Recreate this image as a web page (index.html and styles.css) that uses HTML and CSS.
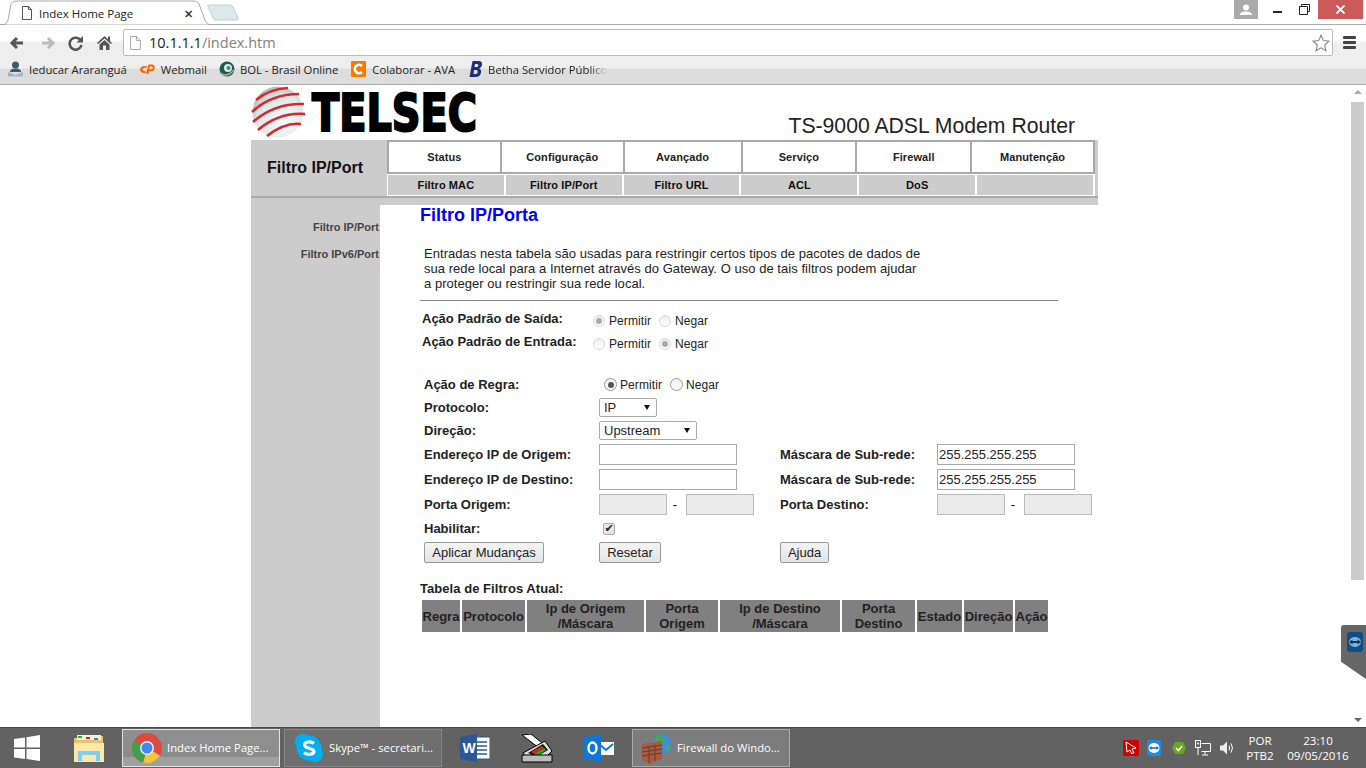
FILE: index.html
```html
<!DOCTYPE html>
<html lang="pt-BR">
<head>
<meta charset="utf-8">
<title>Index Home Page</title>
<link rel="stylesheet" href="styles.css">
</head>
<body>
<div class="screen">
  <div class="tabstrip">
    <div class="tab">
      <svg class="tab-shape" width="240" height="26" viewBox="0 0 240 26"><path d="M0 24.500H3C6 24.500 7 23 8 20L11 4C12 2 14 1 17 1H193C196 1 198 2 199 4L205 20C206 23 207 24.500 211 24.500H240" fill="#fff" stroke="#aaa"/><path d="M208 6.500C207 5.500 208 5 210 5H229C231 5 232 5.500 233 7L238 18C238.500 19.500 238 20 236 20H216C214 20 213.500 19.500 213 18Z" fill="#dbe9ea" stroke="#c4cfd0"/></svg>
      <svg class="tab-fav" width="12" height="14" viewBox="0 0 12 14"><path d="M1.500.5H7.500L10.500 3.500V13.500H1.500Z M7.500.5V3.500H10.500" fill="#fff" stroke="#555"/></svg>
      <span class="tab-title">Index Home Page</span>
      <span class="tab-close">✕</span>
    </div>
    <div class="window-controls">
      <div class="profile"><svg width="14" height="12" viewBox="0 0 14 12"><circle cx="7" cy="3.500" r="3" fill="#fff"/><path d="M1 11C1 8 4 7.500 7 7.500S13 8 13 11Z" fill="#fff"/></svg></div>
      <div class="win-btn win-min"><svg width="10" height="3" viewBox="0 0 10 3"><rect width="9" height="2" y="1" fill="#222"/></svg></div>
      <div class="win-btn"><svg width="11" height="11" viewBox="0 0 11 11"><path d="M2.500 2.500V.5H10.500V7.500H8.500M.5 2.500H8.500V10.500H.5Z" fill="none" stroke="#222"/></svg></div>
      <div class="win-close"><svg width="9" height="9" viewBox="0 0 9 9"><path d="M.5.5L8.500 8.500M8.500.5L.5 8.500" stroke="#fff" stroke-width="1.800"/></svg></div>
    </div>
  </div>
  <div class="toolbar">
    <svg class="nav-icon n-back" width="16" height="14" viewBox="0 0 16 14"><path d="M14 7H4M8 2L3 7L8 12" fill="none" stroke="#555" stroke-width="3"/></svg>
    <svg class="nav-icon n-fwd" width="16" height="14" viewBox="0 0 16 14"><path d="M2 7H12M8 2L13 7L8 12" fill="none" stroke="#bbb" stroke-width="3"/></svg>
    <svg class="nav-icon n-reload" width="16" height="16" viewBox="0 0 16 16"><path d="M13 6A6 6 0 1 0 13.500 10" fill="none" stroke="#555" stroke-width="2.600"/><path d="M15 1V7.500H8.500Z" fill="#555"/></svg>
    <svg class="nav-icon n-home" width="15" height="15" viewBox="0 0 15 15"><path d="M0 8L7.500 1L11 4.200V1.500H13V6L15 8L13.800 9L7.500 3.500L1.200 9Z M2.500 9.500L7.500 5L12.500 9.500V15H9V10.500H6V15H2.500Z" fill="#555"/></svg>
    <div class="omnibox">
      <svg width="11" height="14" viewBox="0 0 11 14"><path d="M.5.5H6.500L10.500 4.500V13.500H.5Z M6.500.5V4.500H10.500" fill="#fff" stroke="#aaa"/></svg>
      <span class="url"><span class="url-host">10.1.1.1</span>/index.htm</span>
      <svg class="star" width="18" height="18" viewBox="0 0 18 18"><path d="M9 1.200L11.300 6.600L17 7.100L12.700 11L14 16.800L9 13.800L4 16.800L5.300 11L1 7.100L6.700 6.600Z" fill="#fff" stroke="#888" stroke-width="1.100"/></svg>
    </div>
    <div class="menu-btn"><i></i><i></i><i></i></div>
  </div>
  <div class="bookmarks">
    <div class="bm bm-1"><svg width="17" height="16" viewBox="0 0 17 16"><circle cx="8.500" cy="4" r="3.500" fill="#3d5a6c"/><path d="M3 11C3 8 6 7.500 8.500 7.500S14 8 14 11Z" fill="#3d5a6c"/><path d="M1 11L8.500 14L16 11V15.500H1Z" fill="#9fb4c0"/></svg><span>Ieducar Araranguá</span></div>
    <div class="bm bm-2"><svg width="17" height="12" viewBox="0 0 17 12"><path d="M8 3H6C3 3 1 4 1 6.500S3 10 5 10H6.500L7 8.200H5.500C3 8.200 3 4.800 5.500 4.800H7.500Z" fill="#f60"/><path d="M9.500 1.500L7 11H9.300L10 8.200H12.500C16.500 8.200 17 1.500 13 1.500ZM10.800 3.500H12.500C14.300 3.500 14 6.300 12.300 6.300H10.300Z" fill="#f60" fill-rule="evenodd"/></svg><span>Webmail</span></div>
    <div class="bm bm-3"><svg width="16" height="16" viewBox="0 0 16 16"><circle cx="8" cy="8" r="7.500" fill="#1d5c4a"/><circle cx="9" cy="7" r="4" fill="#dfe9e4"/><circle cx="9.500" cy="7" r="2" fill="#2d8a9a"/><path d="M1 12Q8 17 15 9" fill="none" stroke="#aaa" stroke-width="1.500"/></svg><span>BOL - Brasil Online</span></div>
    <div class="bm bm-4"><svg width="15" height="16" viewBox="0 0 15 16"><rect width="15" height="16" rx="1" fill="#f57c00"/><path d="M11 5A4.200 4.200 0 1 0 11 11" fill="none" stroke="#fff" stroke-width="2.600"/></svg><span>Colaborar - AVA</span></div>
    <div class="bm bm-5"><svg width="14" height="16" viewBox="0 0 13 16"><path d="M3 0H9C12 0 13 2 12.500 4C12 6 11 7 9.500 7.500C11 8 12 9.500 11.500 11.500C11 14.500 9 16 5.500 16H0ZM5.500 3L5 6H7.500C9 6 9.500 3 7.500 3ZM4.500 9L4 13H6.500C8.500 13 9 9 7 9Z" fill="#1f2f7c" fill-rule="evenodd"/></svg><span class="bm-fade">Betha Servidor Público</span></div>
  </div>
  <div class="viewport">
    <div class="page">
      <div class="router">
        <header class="brand">
          <svg class="logo" width="226" height="55" viewBox="0 0 226 55">
            <defs><radialGradient id="globe" cx=".6" cy=".7" r=".75"><stop offset="0" stop-color="#f6fafa"/><stop offset=".7" stop-color="#dce8e8"/><stop offset="1" stop-color="#9fb2b2"/></radialGradient></defs>
            <circle cx="27" cy="27" r="25.500" fill="url(#globe)"/>
            <g fill="none" stroke="#e3222a" stroke-width="2.600">
              <path d="M5 15Q18 4 37 3"/>
              <path d="M1 27Q20 9 48 9"/>
              <path d="M2 37Q23 18 53 19"/>
              <path d="M7 45Q28 27 54 29"/>
              <path d="M16 51Q34 37 50 39"/>
            </g>
            <text class="logo-text" x="61" y="46" textLength="165" lengthAdjust="spacingAndGlyphs">TELSEC</text>
          </svg>
          <h1 class="model">TS-9000 ADSL Modem Router</h1>
        </header>
        <div class="band">
          <div class="band-title">Filtro IP/Port</div>
          <nav class="menus">
            <div class="menu-top">
              <a class="top-a">Status</a><a class="top-b">Configuração</a><a class="top-c">Avançado</a><a class="top-d">Serviço</a><a class="top-d">Firewall</a><a class="top-b">Manutenção</a>
            </div>
            <div class="menu-sub">
              <a class="sub-b">Filtro MAC</a><a class="sub-b">Filtro IP/Port</a><a class="sub-b">Filtro URL</a><a class="sub-b">ACL</a><a class="sub-b">DoS</a><a class="sub-b"></a>
            </div>
          </nav>
        </div>
        <div class="body">
          <aside class="side">
            <a>Filtro IP/Port</a>
            <a>Filtro IPv6/Port</a>
          </aside>
          <main class="content">
            <h2 class="heading">Filtro IP/Porta</h2>
            <p class="intro">Entradas nesta tabela são usadas para restringir certos tipos de pacotes de dados de<br>sua rede local para a Internet através do Gateway. O uso de tais filtros podem ajudar<br>a proteger ou restringir sua rede local.</p>
            <hr class="rule">
            <div class="defaults">
              <div class="d-label">Ação Padrão de Saída:</div>
              <div class="radios"><input class="radio off" type="radio" name="o" checked disabled><span>Permitir</span><input class="radio off" type="radio" name="o" disabled><span>Negar</span></div>
              <div class="d-label">Ação Padrão de Entrada:</div>
              <div class="radios"><input class="radio off" type="radio" name="i" disabled><span>Permitir</span><input class="radio off" type="radio" name="i" checked disabled><span>Negar</span></div>
            </div>
            <form class="rule-form">
              <div class="f-label">Ação de Regra:</div>
              <div class="radios big span3"><input class="radio" type="radio" name="r" checked><span>Permitir</span><input class="radio" type="radio" name="r"><span>Negar</span></div>
              <div class="f-label">Protocolo:</div>
              <div class="span3"><span class="select s-ip"><select><option>IP</option></select></span></div>
              <div class="f-label">Direção:</div>
              <div class="span3"><span class="select s-dir"><select><option>Upstream</option></select></span></div>
              <div class="f-label">Endereço IP de Origem:</div>
              <div><input class="field" type="text"></div>
              <div class="f-label">Máscara de Sub-rede:</div>
              <div><input class="field" type="text" value="255.255.255.255"></div>
              <div class="f-label">Endereço IP de Destino:</div>
              <div><input class="field" type="text"></div>
              <div class="f-label">Máscara de Sub-rede:</div>
              <div><input class="field" type="text" value="255.255.255.255"></div>
              <div class="f-label">Porta Origem:</div>
              <div class="ports"><input class="port" type="text" disabled><span>-</span><input class="port" type="text" disabled></div>
              <div class="f-label">Porta Destino:</div>
              <div class="ports"><input class="port" type="text" disabled><span>-</span><input class="port" type="text" disabled></div>
              <div class="f-label">Habilitar:</div>
              <div class="span3"><input class="check" type="checkbox" checked></div>
              <div><button class="btn b-apply" type="button">Aplicar Mudanças</button></div>
              <div><button class="btn b-reset" type="button">Resetar</button></div>
              <div class="span2"><button class="btn b-help" type="button">Ajuda</button></div>
            </form>
            <div class="table-title">Tabela de Filtros Atual:</div>
            <table class="filters">
              <tr>
                <th class="c1">Regra</th><th class="c2">Protocolo</th><th class="c3">Ip de Origem<br>/Máscara</th><th class="c4">Porta<br>Origem</th><th class="c5">Ip de Destino<br>/Máscara</th><th class="c6">Porta<br>Destino</th><th class="c7">Estado</th><th class="c8">Direção</th><th class="c9">Ação</th>
              </tr>
            </table>
          </main>
        </div>
      </div>
    </div>
    <div class="scrollbar">
      <i class="arrow-up"></i>
      <div class="thumb"></div>
      <i class="arrow-down"></i>
    </div>
    <div class="tv-tab"><svg width="18" height="22" viewBox="0 0 18 22"><rect x="1" y="1" width="16" height="20" rx="3" fill="#0f4f86"/><ellipse cx="9" cy="11" rx="6" ry="5" fill="#7fb4d8"/><path d="M3 11L6.500 8.500V10H11.500V8.500L15 11L11.500 13.500V12H6.500V13.500Z" fill="#0f3a60"/></svg></div>
  </div>
  <footer class="taskbar">
    <svg class="tb-win" width="26" height="26" viewBox="0 0 26 26"><path d="M0 4L11 2.500V12.500H0ZM12.500 2.200L26 0V12.500H12.500ZM0 14H11V24L0 22.500ZM12.500 14H26V26L12.500 24Z" fill="#fff"/></svg>
    <svg class="tb-folder" width="32" height="29" viewBox="0 0 32 29"><path d="M1 4H9L11 2H30V28H1Z" fill="#e9c46a"/><rect x="4" y="1" width="24" height="5" fill="#f6f0d8"/><rect x="5" y="2" width="4" height="2" fill="#3a3"/><rect x="13" y="3" width="4" height="2" fill="#c33"/><rect x="21" y="4" width="4" height="2" fill="#38c"/><path d="M1 9H31V28H1Z" fill="#fbe9a8"/><path d="M5 27V17H27V27H23V21H9V27Z" fill="#7fd0f0"/></svg>
    <div class="task active">
      <svg width="30" height="30" viewBox="0 0 30 30"><circle cx="15" cy="15" r="15" fill="#dd4b3e"/><path d="M15 15L28 22.500A15 15 0 0 1 11 29.500Z" fill="#f6c33c"/><path d="M15 15L11 29.500A15 15 0 0 1 2 7.500Z" fill="#3fa14a"/><circle cx="15" cy="15" r="7" fill="#eef"/><circle cx="15" cy="15" r="5.500" fill="#4285f4"/></svg>
      <span>Index Home Page...</span>
    </div>
    <div class="task">
      <svg width="30" height="30" viewBox="0 0 30 30"><circle cx="9" cy="9" r="8" fill="#00aff0"/><circle cx="21" cy="21" r="8" fill="#00aff0"/><circle cx="15" cy="15" r="12.500" fill="#00aff0"/><path d="M20 10.500C18 8.500 10.500 8 10.500 12C10.500 16 20 14.500 20 18.500C20 22 12 22 10 19.500" fill="none" stroke="#fff" stroke-width="3.200"/></svg>
      <span>Skype™ - secretari...</span>
    </div>
    <svg class="tb-word" width="30" height="28" viewBox="0 0 30 28"><rect x="12" y="3" width="18" height="22" fill="#fff" stroke="#2b579a"/><path d="M15 8H27M15 12H27M15 16H27M15 20H27" stroke="#2b579a" stroke-width="1.500"/><path d="M0 3L17 0V28L0 25Z" fill="#2b579a"/><text class="word-w" x="2.500" y="19">W</text></svg>
    <svg class="tb-scan" width="32" height="29" viewBox="0 0 32 29"><path d="M1 1L10 0L31 17L26 20Z" fill="#fff" stroke="#000"/><path d="M2 19L24 7L31 17L24 24L6 24Z" fill="#ddd" stroke="#000"/><path d="M7 19L22 10L27 16L15 23Z" fill="#181818"/><path d="M10 18L21 12L23 14L13 20Z" fill="#d22"/><path d="M13 20L23 14L25 16L16 22Z" fill="#2a2"/><path d="M1 21H31V28H1Z" fill="#bbb" stroke="#000"/></svg>
    <svg class="tb-out" width="30" height="28" viewBox="0 0 30 28"><rect x="14" y="8" width="16" height="13" fill="#fff"/><path d="M15 10L22 16L29 10" fill="none" stroke="#0f78d4" stroke-width="2"/><path d="M0 3L17 0V28L0 25Z" fill="#0f78d4"/><ellipse cx="8.500" cy="14" rx="4" ry="5.500" fill="none" stroke="#fff" stroke-width="2.400"/></svg>
    <div class="task task-fw">
      <svg width="32" height="31" viewBox="0 0 32 31"><circle cx="21" cy="11" r="10" fill="#3f8fd6"/><path d="M15 3L24 4L22 11L15 10Z M25 12L30 13L26 20Z" fill="#4fa84a"/><path d="M1 11L21 8V26L8 31L1 27Z" fill="#a85a44"/><path d="M1 15L21 12M1 19L21 16M1 23L21 20M8 13V30M14 12V28" stroke="#6e3a2c"/></svg>
      <span>Firewall do Windo...</span>
    </div>
    <div class="tray">
      <svg width="16" height="16" viewBox="0 0 16 16"><rect width="16" height="16" rx="1" fill="#d40000"/><path d="M3 2L13 8L9 9L11 13L8.500 13.500L7 10L4 12Z" fill="none" stroke="#fff"/></svg>
      <svg class="t-tv" width="14" height="16" viewBox="0 0 14 16"><rect width="14" height="16" rx="2" fill="#1c8be6"/><ellipse cx="7" cy="8" rx="5.500" ry="5" fill="#fff"/><path d="M2 8L4.500 6V7.200H9.500V6L12 8L9.500 10V8.800H4.500V10Z" fill="#1c6bb6"/></svg>
      <svg class="t-gr" width="14" height="14" viewBox="0 0 14 14"><path d="M3 1L11 1L14 7L11 13L3 13L0 7Z" fill="#6aa51e"/><path d="M4 7L6.500 9.500L10 5" fill="none" stroke="#fff" stroke-width="1.500"/></svg>
      <svg class="t-net" width="16" height="16" viewBox="0 0 16 16"><path d="M6.500 3.500H15.500V11.500H6.500M10 11.500V14.500M7 15H13" fill="none" stroke="#fff"/><rect x=".5" y=".5" width="5" height="7" fill="#666" stroke="#fff"/><path d="M3 7.500V15" stroke="#fff"/><circle cx="3" cy="3.500" r="1" fill="#fff"/></svg>
      <svg class="t-vol" width="16" height="16" viewBox="0 0 16 16"><path d="M1 5.500H4L8 1.500V14.500L4 10.500H1Z" fill="#eee"/><path d="M10 5.500Q11.500 8 10 10.500M12 3.500Q15 8 12 12.500" fill="none" stroke="#fff"/></svg>
      <div class="lang">POR<br>PTB2</div>
      <div class="clock">23:10<br>09/05/2016</div>
    </div>
  </footer>
</div>
</body>
</html>
```

FILE: styles.css
```css
* { box-sizing: border-box; }
html, body { margin: 0; padding: 0; height: 100%; overflow: hidden; }
body { font-family: "Liberation Sans", Arial, sans-serif; color: #000; background: #fff; }
.screen { width: 1366px; height: 768px; display: flex; flex-direction: column; overflow: hidden; }

/* browser chrome */
.tabstrip { height: 24px; flex: none; display: flex; justify-content: space-between; background: #fff; position: relative; z-index: 2; }
.tab { position: relative; width: 240px; height: 24px; display: flex; align-items: center; font-family: "Open Sans", sans-serif; font-size: 11.500px; color: #222; }
.tab-shape { position: absolute; left: 0; top: 0; overflow: visible; }
.tab-fav { position: relative; margin: 2px 0 0 21px; flex: none; }
.tab-title { position: relative; margin: 2px 0 0 6px; width: 145px; flex: none; white-space: nowrap; }
.tab-close { position: relative; margin-top: 2px; font-size: 11px; font-weight: 700; color: #444; }
.window-controls { display: flex; align-items: flex-start; margin-right: 3px; }
.profile { width: 24px; height: 19px; background: #aaa; display: flex; align-items: center; justify-content: center; margin-right: 7px; }
.win-btn { width: 26px; height: 19px; display: flex; align-items: center; justify-content: center; }
.win-min { padding-top: 4px; }
.win-close { width: 45px; height: 19px; background: #cd5a5a; display: flex; align-items: center; justify-content: center; margin-left: 1px; }

.toolbar { height: 32px; flex: none; display: flex; align-items: center; padding: 4px 0 0 9px; background: linear-gradient(#fff 0, #fff 45%, #eee 60%, #eee 100%); border-top: 1px solid #aaa; font-family: "Open Sans", sans-serif; }
.nav-icon { flex: none; }
.n-back { margin-right: 15px; }
.n-fwd { margin-right: 12px; }
.n-reload { margin-right: 13px; }
.n-home { margin-right: 11px; }
.omnibox { width: 1210px; height: 27px; background: #fff; border: 1px solid #bbb; border-radius: 2px; display: flex; align-items: center; padding: 0 2px 0 6px; }
.url { margin-left: 8px; font-size: 14.500px; color: #808080; flex: 1; }
.url-host { color: #222; }
.star { flex: none; }
.menu-btn { width: 13px; margin-left: 10px; display: flex; flex-direction: column; gap: 2px; }
.menu-btn i { height: 3px; background: #444; border-radius: 1px; }

.bookmarks { height: 29px; flex: none; display: flex; align-items: center; padding: 0 0 2px 7px; background: linear-gradient(#eee 0, #eee 42%, #ddd 47%, #ddd 100%); border-bottom: 1px solid #aaa; font-family: "Open Sans", sans-serif; font-size: 11.300px; color: #222; white-space: nowrap; }
.bm { display: flex; align-items: center; gap: 5px; }
.bm-2 { margin-left: 12px; }
.bm-3 { margin-left: 12px; }
.bm-4 { margin-left: 13px; gap: 6px; }
.bm-5 { margin-left: 14px; }
.bm-fade { width: 119px; overflow: hidden; -webkit-mask-image: linear-gradient(90deg, #000 85%, transparent 100%); mask-image: linear-gradient(90deg, #000 85%, transparent 100%); }

/* viewport */
.viewport { flex: 1; min-height: 0; display: flex; background: #fff; position: relative; }
.page { flex: 1; padding-left: 251px; overflow: hidden; }
.router { width: 847px; height: 100%; display: flex; flex-direction: column; }
.brand { height: 55px; flex: none; display: flex; justify-content: space-between; align-items: flex-end; }
.logo { display: block; flex: none; overflow: visible; }
.logo-text { font-family: "DejaVu Sans", sans-serif; font-weight: 700; font-size: 51px; fill: #000; stroke: #000; stroke-width: 2.200px; }
.model { margin: 0 23px 1px 0; font-weight: 400; font-size: 21.200px; line-height: 26px; color: #222; white-space: nowrap; }

.band { height: 65px; flex: none; display: flex; background: #ccc; position: relative; }
.band::after { content: ""; position: absolute; left: 0; right: 0; top: 56px; height: 2px; background: #aaa; }
.band-title { width: 136px; padding: 18px 0 0 16px; font-size: 16px; line-height: 20px; font-weight: 700; white-space: nowrap; color: #111; }
.menus { width: 708px; font-size: 11px; font-weight: 700; color: #222; }
.menu-top { height: 34px; display: flex; padding: 2px 0 0 2px; background: #aaa; }
.menu-top a { height: 30px; margin-right: 2px; background: #fff; display: flex; align-items: center; justify-content: center; letter-spacing: .1px; }
.top-a { width: 111px; }
.top-b { width: 121px; }
.top-c { width: 116px; }
.top-d { width: 113px; }
.menu-sub { height: 22px; display: flex; padding: 1px 0 0 1px; background: #fff; }
.menu-sub a { height: 20px; margin-right: 2px; background: #ccc; display: flex; align-items: center; justify-content: center; letter-spacing: .1px; color: #111; }
.sub-b { width: 116px; }

.body { flex: 1; min-height: 0; display: flex; }
.side { width: 129px; flex: none; background: #ccc; padding: 16px 1px 0 0; display: flex; flex-direction: column; align-items: flex-end; gap: 14px; font-size: 11px; font-weight: 700; line-height: 13px; color: #444; }
.content { flex: 1; padding: 0 0 0 40px; }
.heading { margin: 0; font-size: 18px; line-height: 20px; font-weight: 700; color: #00f; }
.intro { margin: 21px 0 0 4px; font-size: 13px; line-height: 15px; color: #222; letter-spacing: .04px; white-space: nowrap; }
.rule { margin: 9px 0 0; width: 638px; height: 1px; border: 0; background: #888; }

.defaults { margin: 8px 0 0 2px; display: grid; grid-template-columns: 171px 1fr; grid-auto-rows: 23px; align-items: center; }
.d-label { font-size: 13px; font-weight: 700; color: #222; white-space: nowrap; position: relative; top: -2px; }
.radios { display: flex; align-items: center; font-size: 12px; letter-spacing: .08px; color: #222; white-space: nowrap; }
.radio { appearance: none; width: 12px; height: 12px; margin: 0 4px 0 0; border-radius: 50%; border: 1px solid #d8d8d8; background: linear-gradient(#eee, #fff); display: inline-flex; align-items: center; justify-content: center; flex: none; }
.radio:checked::before { content: ""; width: 6px; height: 6px; border-radius: 50%; background: #aaa; }
.radios span + .radio { margin-left: 8px; }
.big { padding-left: 5px; }
.big .radio { width: 13px; height: 13px; margin-right: 3px; border-color: #999; }
.big .radio:checked::before { background: #555; }
.big span + .radio { margin-left: 8px; }

.rule-form { margin: 18px 0 0 4px; display: grid; grid-template-columns: 175px 181px 157px 1fr; grid-template-rows: 23px 23px 23px 25px 25px 25px 23px 24px; align-items: center; font-size: 13px; }
.f-label { font-weight: 700; color: #222; white-space: nowrap; }
.span3 { grid-column: span 3; }
.span2 { grid-column: span 2; }
.select { display: inline-block; position: relative; height: 19px; vertical-align: top; }
.select select { appearance: none; height: 100%; width: 100%; padding: 0 0 0 4px; border: 1px solid #aaa; border-radius: 2px; background: #fff; font: 13px "Liberation Sans", sans-serif; color: #222; }
.select::after { content: ""; position: absolute; right: 7px; top: 7px; border: 3px solid transparent; border-top: 5px solid #111; border-bottom: 0; }
.s-ip { width: 58px; }
.s-dir { width: 98px; }
.field { display: block; width: 138px; height: 21px; border: 1px solid #aaa; padding: 0 1px; font: 13px "Liberation Sans", sans-serif; color: #222; background: #fff; }
.ports { display: flex; align-items: center; font-size: 13px; }
.ports span { width: 19px; padding-right: 3px; text-align: center; }
.port { width: 68px; height: 21px; border: 1px solid #bbb; background: #ebebeb; padding: 0; }
.check { appearance: none; display: flex; align-items: center; justify-content: center; width: 12px; height: 12px; margin: 0 0 0 4px; border: 1px solid #aaa; border-radius: 2px; background: #e6e6e6; font-size: 11px; line-height: 10px; color: #222; }
.check:checked::before { content: "✔"; font-family: "DejaVu Sans", sans-serif; }
.btn { display: block; height: 21px; padding: 0; border: 1px solid #999; border-radius: 2px; background: linear-gradient(#f4f4f4, #e4e4e4); font: 13px "Liberation Sans", sans-serif; color: #222; }
.b-apply { width: 120px; }
.b-reset { width: 62px; }
.b-help { width: 49px; }

.table-title { margin: 17px 0 0; font-size: 13px; line-height: 15px; font-weight: 700; letter-spacing: .05px; color: #222; white-space: nowrap; }
.filters { margin: 2px 0 0 0; border-collapse: separate; border-spacing: 2px; table-layout: fixed; width: 630px; }
.filters th { height: 32px; padding: 0; background: #808080; font-size: 13px; line-height: 15px; font-weight: 700; color: #222; white-space: nowrap; text-align: center; overflow: visible; }
.c1 { width: 38px; } .c2 { width: 63px; } .c3 { width: 117px; } .c4 { width: 72px; } .c5 { width: 120px; } .c6 { width: 73px; } .c7 { width: 45px; } .c8 { width: 49px; } .c9 { width: 33px; }

.tv-tab { position: absolute; right: 0; top: 540px; width: 25px; height: 54px; background: #666; clip-path: polygon(0 0, 100% 0, 100% 100%, 0 68%); border-radius: 3px 0 0 0; padding: 6px 0 0 5px; }
.tv-tab svg { display: block; }

.scrollbar { width: 17px; flex: none; position: relative; padding: 17px 2px 0; background: #fff; }
.thumb { height: 478px; background: #ccc; }
.arrow-up, .arrow-down { position: absolute; left: 5px; border: 4px solid transparent; }
.arrow-up { top: 5px; border-bottom: 4px solid #aaa; border-top: 0; }
.arrow-down { bottom: 5px; border-top: 4px solid #666; border-bottom: 0; }

/* taskbar */
.taskbar { height: 41px; flex: none; display: flex; align-items: center; background: #626262; border-top: 1px solid #4a4a4a; font-family: "Open Sans", sans-serif; font-size: 11.300px; color: #fff; }
.tb-win { margin-left: 14px; flex: none; }
.tb-folder { margin-left: 33px; flex: none; }
.task { width: 158px; height: 38px; margin-left: 4px; flex: none; display: flex; align-items: center; gap: 5px; padding-left: 9px; border: 1px solid #858585; background: #6e6e6e; white-space: nowrap; overflow: hidden; }
.task span { padding-bottom: 2px; }
.tb-folder + .task { margin-left: 17px; }
.task.active { background: linear-gradient(#909090, #8b8b8b 75%, #a0a0a0 75%); border-color: #e4e4e4; }
.task-fw { margin-left: 18px; background: #7c7c7c; border-color: #aaa; padding-left: 8px; gap: 4px; }
.tb-word { margin-left: 18px; flex: none; }
.tb-scan { margin-left: 31px; flex: none; }
.tb-out { margin-left: 31px; flex: none; }
.word-w { font-family: "Liberation Sans", sans-serif; font-weight: 700; font-size: 14px; fill: #fff; }
.tray { margin-left: auto; display: flex; align-items: center; padding-right: 16px; text-align: center; line-height: 15px; font-size: 11.600px; }
.t-tv { margin-left: 8px; }
.t-gr { margin-left: 11px; }
.t-net { margin-left: 9px; }
.t-vol { margin-left: 8px; }
.lang { width: 50px; }
.clock { width: 64px; margin-left: 1px; }
```
